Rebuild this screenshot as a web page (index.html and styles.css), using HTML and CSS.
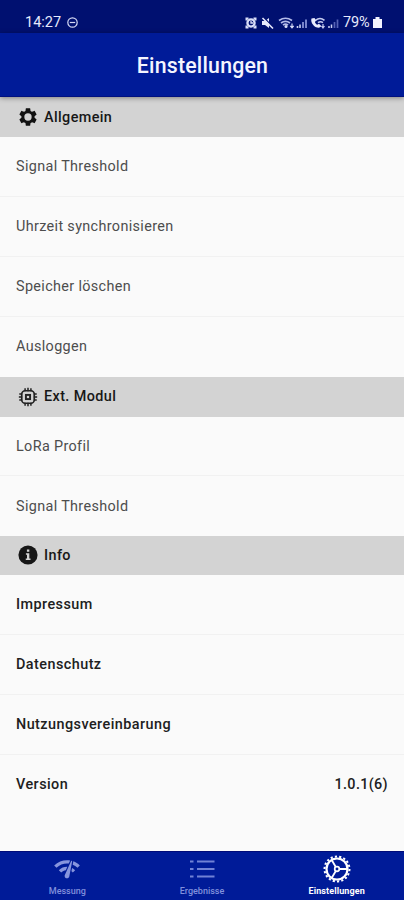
FILE: index.html
```html
<!DOCTYPE html>
<html lang="de">
<head>
<meta charset="utf-8">
<title>Einstellungen</title>
<link rel="stylesheet" href="styles.css">
</head>
<body>
<div class="app">
  <div class="status">
    <span class="time">14:27</span>
    <svg class="dnd" width="11" height="11" viewBox="0 0 11 11" fill="none" stroke="#d3d8f4" stroke-width="1.2"><circle cx="5.5" cy="5.5" r="4.7"/><path d="M2.800 5.500h5.400"/></svg>
    <svg class="indicators" width="96" height="14" viewBox="0 0 96 14">
      <g fill="none" stroke="#d9def8" stroke-width="1.3">
        <path d="M1.500 4.500v-2h2M8.500 2.500h2v2M1.500 9.500v2h2M8.500 11.500h2v-2" stroke-width="2"/>
        <circle cx="6" cy="7" r="3.600" stroke-width="2.300"/><path d="M6 5v2h2"/>
      </g>
      <path d="M17 5h3l4-3v10l-4-3h-3z" fill="#e7eafc"/>
      <path d="M19 1.500l10 11" stroke="#00106f" stroke-width="1.300"/><path d="M17.500 2l10.500 10.500" stroke="#e7eafc" stroke-width="1.600"/>
      <g fill="none" stroke="#b3bbe9" stroke-width="1.700">
        <path d="M34 4.500q6.500-4.500 13 0M36 7q4.500-3.300 9 0M38 9.200q2.500-2 5 0"/>
      </g>
      <circle cx="41" cy="10.500" r="1.500" fill="#d9def8"/>
      <path d="M47 7.500v4M45.300 9.800l1.700 2 1.700-2" fill="none" stroke="#d9def8" stroke-width="1.200"/>
      <path d="M52.500 12v-2M55 12V8.500" stroke="#cbd1f2" stroke-width="1.600"/>
      <path d="M58 12V6M61 12V3.500" stroke="#7783cb" stroke-width="2"/>
      <path d="M66.500 2.500c-1.500 4 3 9.500 7.500 9.300l2.500-1.600-2.500-2.400-1.800 1c-1.200-.6-2-1.700-2.300-2.800l1.300-1.500L69.500 2z" fill="#e7eafc"/>
      <path d="M70.500 4.300q4.500-3.500 9 0M73 6.700q2.500-1.800 5 0" fill="none" stroke="#c5ccf0" stroke-width="1.600"/>
      <path d="M78 8v4M76.500 10l1.500 2 1.500-2" fill="none" stroke="#c5ccf0" stroke-width="1.200"/>
      <path d="M84 12v-2M86.500 12V8.500" stroke="#cbd1f2" stroke-width="1.500"/>
      <path d="M89.500 12V6M92.500 12V3.500" stroke="#5662b5" stroke-width="1.700"/>
    </svg>
    <span class="percent">79%</span>
    <svg class="battery" width="9" height="11" viewBox="0 0 9 11"><path d="M2.500 0h4v2H9v9H0V2h2.500z" fill="#f2f3ff"/></svg>
  </div>
  <header class="header">Einstellungen</header>
  <main class="content">
    <section>
      <h2 class="heading shaded">
        <svg class="icon" viewBox="0 0 24 24"><path fill="#111" d="M19.140 12.940c.04-.3.060-.61.060-.94 0-.32-.02-.64-.07-.94l2.030-1.580c.18-.14.230-.41.120-.61l-1.920-3.320c-.12-.22-.37-.29-.59-.22l-2.390.96c-.5-.38-1.030-.7-1.620-.94l-.36-2.540c-.04-.24-.24-.41-.48-.41h-3.840c-.24 0-.43.170-.47.410l-.36 2.540c-.59.240-1.130.570-1.620.940l-2.390-.96c-.22-.08-.47 0-.59.220L2.740 8.870c-.12.210-.08.470.120.610l2.030 1.580c-.05.300-.09.630-.09.940s.02.640.070.940l-2.030 1.580c-.18.140-.23.410-.12.610l1.920 3.320c.12.220.37.290.59.220l2.390-.96c.5.380 1.030.7 1.620.940l.36 2.540c.05.240.24.410.48.410h3.840c.24 0 .44-.17.470-.41l.36-2.540c.59-.24 1.130-.56 1.620-.94l2.390.96c.22.080.47 0 .59-.22l1.920-3.320c.12-.22.070-.47-.12-.61l-2.010-1.580zM12 16a4 4 0 1 1 0-8 4 4 0 0 1 0 8z"/></svg>
        Allgemein
      </h2>
      <div class="row">Signal Threshold</div>
      <div class="row">Uhrzeit synchronisieren</div>
      <div class="row">Speicher löschen</div>
      <div class="row">Ausloggen</div>
    </section>
    <section class="module">
      <h2 class="heading">
        <svg class="icon" viewBox="0 0 24 24" fill="none" stroke="#222"><rect x="4.500" y="4.500" width="15" height="15" rx="4" stroke-width="2"/><rect x="9.500" y="9.500" width="5" height="5" stroke-width="2.300"/><path stroke-width="1.800" d="M8.500 5V1.500M12 5V1M15.500 5V1.500M8.500 22.500V19M12 23v-4M15.500 22.500V19M5 8.500H1.500M5 12H1M5 15.500H1.500M22.500 8.500H19M23 12h-4M22.500 15.500H19"/></svg>
        Ext. Modul
      </h2>
      <div class="row">LoRa Profil</div>
      <div class="row">Signal Threshold</div>
    </section>
    <section class="info">
      <h2 class="heading">
        <svg class="icon" viewBox="0 0 24 24"><circle cx="12" cy="12" r="11.500" fill="#161616"/><path fill="#d3d3d3" d="M10.700 5.500h2.900v2.700h-2.900zM9.500 10h4.100v6.200H15V18H9.300v-1.800h1.500v-4.400H9.500z"/></svg>
        Info
      </h2>
      <div class="row">Impressum</div>
      <div class="row">Datenschutz</div>
      <div class="row">Nutzungsvereinbarung</div>
      <div class="row">Version<span class="value">1.0.1(6)</span></div>
    </section>
  </main>
  <nav class="tabs">
    <a class="tab">
      <svg width="28" height="28" viewBox="0 0 24 24" fill="#8795dd"><path d="M15.900 5c-.17 0-.32.090-.41.230l-.07.150-5.180 11.650c-.16.290-.26.610-.26.960 0 1.110.9 2.010 2.010 2.010.96 0 1.770-.68 1.960-1.590l.01-.03L16.400 5.500c0-.28-.22-.5-.5-.5zM1 9l2 2c2.880-2.880 6.790-4.080 10.530-3.620l1.190-2.680C9.890 3.840 4.740 5.270 1 9zm20 2l2-2c-1.640-1.640-3.550-2.820-5.590-3.570l-.53 2.820c1.500.62 2.900 1.530 4.120 2.750zm-4 4l2-2c-.8-.8-1.700-1.420-2.660-1.890l-.55 2.920c.42.270.83.590 1.210.97zM5 13l2 2c1.130-1.130 2.560-1.790 4.030-2l1.280-2.880c-2.630-.08-5.300.87-7.310 2.880z"/></svg>
      <span>Messung</span>
    </a>
    <a class="tab">
      <svg width="28" height="28" viewBox="0 0 28 28" stroke="#7182d5" stroke-width="2"><path d="M2 6.500h3.500M2 14h3.500M2 21.500h3.500M9 6.500h17.500M9 14h17.500M9 21.500h17.500"/></svg>
      <span>Ergebnisse</span>
    </a>
    <a class="tab active">
      <svg width="28" height="28" viewBox="0 0 28 28" fill="none" stroke="#fff"><circle cx="14" cy="14" r="10.500" stroke-width="2.200"/><circle cx="14" cy="14" r="12.500" stroke-width="2" pathLength="72" stroke-dasharray="2 2"/><circle cx="14" cy="14" r="2.300" stroke-width="1.700"/><path stroke-width="1.800" d="M16.300 14H24M12.800 12L8.700 5M12.800 16l-4.100 7"/></svg>
      <span>Einstellungen</span>
    </a>
  </nav>
</div>
</body>
</html>
```
FILE: styles.css
```css
* { box-sizing: border-box; }
body { margin: 0; font-family: Roboto, sans-serif; background: #fafafa; }
.app { width: 404px; height: 900px; display: flex; flex-direction: column; overflow: hidden; }
.status {
  height: 33px; flex: none; display: flex; align-items: center;
  padding: 12px 22px 0 25px; background: #001070; color: #e6e9fc;
}
.time { width: 37px; font-size: 14.5px; line-height: 20px; }
.dnd { margin-left: 5px; }
.indicators { margin-left: auto; }
.percent { width: 29px; margin-left: 2px; font-size: 14.5px; line-height: 20px; letter-spacing: -.1px; }
.battery { margin-left: 1px; }
.header {
  height: 64px; flex: none; position: relative; z-index: 1;
  display: flex; align-items: center; justify-content: center; padding: 1px 0 0 1px;
  background: #001b98; border-bottom: 1px solid #00107f; color: #f4f5ff;
  font-size: 21.3px; font-weight: 500; letter-spacing: .2px;
  box-shadow: 0 1px 5px rgba(0, 0, 0, .4);
}
.content { flex: 1; min-height: 0; }
.heading {
  height: 40px; margin: 0; padding-left: 18px; display: flex; align-items: center; gap: 6px;
  background: #d3d3d3; color: #171717; font-size: 14.4px; font-weight: 500; letter-spacing: .4px;
}
.icon { width: 20px; height: 20px; flex: none; }
.shaded .icon { width: 22px; height: 22px; margin: 0 -1px; }
.row {
  height: 60px; padding: 0 16px; display: flex; align-items: center;
  border-bottom: 1px solid #f1f1f1; color: #4d4d4d; font-size: 14.4px; letter-spacing: .35px;
}
.row:last-child { border-bottom-color: transparent; }
.module .heading, .info .heading { height: 39.5px; }
.module .row { height: 59.5px; padding-top: 2px; }
.info .row { color: #202020; font-weight: 500; letter-spacing: .45px; }
.info .value { margin-left: auto; letter-spacing: .35px; }
.tabs {
  height: 49px; flex: none; display: flex; padding: 0;
  background: #001b98; border-top: 1px solid #000c78;
}
.tab {
  flex: 1; display: flex; flex-direction: column; align-items: center;
  padding-top: 3px; color: #8190dc; font-size: 9px; line-height: 12px; font-weight: 500;
}
.tab span { margin-top: 2px; }
.tab.active { color: #fff; font-weight: 700; letter-spacing: .1px; }
```
